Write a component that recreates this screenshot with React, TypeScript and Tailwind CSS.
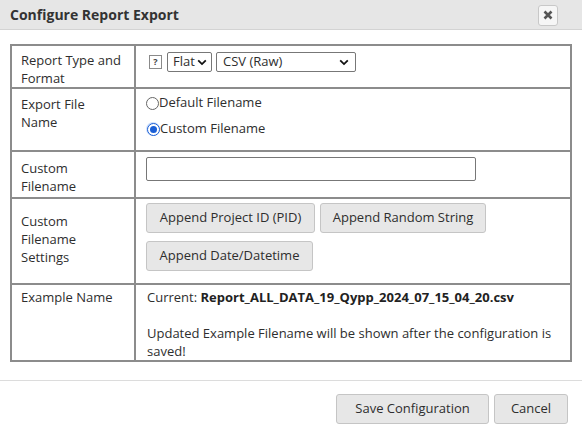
import { FC } from "react"

const Chevron: FC = () => (
    <svg width="10" height="7" viewBox="0 0 10 7" className="shrink-0">
        <path d="M1.2 1.3 5 5.1 8.8 1.3" fill="none" stroke="#111" strokeWidth="1.8" />
    </svg>
)

const Row: FC<{ label: string; h: string; lp: string; children: React.ReactNode }> = ({ label, h, lp, children }) => (
    <div className={`flex border-t-2 border-[#8c8c8c] first:border-t-0 ${h}`}>
        <div className={`w-[124px] shrink-0 border-r-2 border-[#8c8c8c] pl-[9px] pr-[12px] leading-[18px] ${lp}`}>{label}</div>
        <div className="flex-1 pl-[10px] pr-2">{children}</div>
    </div>
)

const Btn: FC<{ children: React.ReactNode; w: string }> = ({ children, w }) => (
    <button className={`h-[30px] ${w} rounded-[3px] border border-[#c5c5c5] bg-[#e7e7e7] text-[13px] text-[#2e2e2e]`}>{children}</button>
)

export default function App() {
    return (
        <div className="w-[582px] h-[436px] bg-white text-[13px] text-[#2e2e2e] font-['Open_Sans',sans-serif] overflow-hidden">
            <div className="h-[30px] bg-[#e6e6e6] border-b border-[#d3d3d3] flex items-center justify-between pl-[10px] pr-[24px]">
                <h1 className="font-bold text-[14px] text-[#333]">Configure Report Export</h1>
                <div className="w-[20px] h-[21px] mt-[1px] rounded-[3px] border border-[#c8c8c8] bg-[#f6f6f6] flex items-center justify-center">
                    <svg width="10" height="10" viewBox="0 0 10 10">
                        <path d="M1.5 1.5 8.5 8.5M8.5 1.5 1.5 8.5" stroke="#555" strokeWidth="2.6" />
                    </svg>
                </div>
            </div>

            <div className="mx-[10px] mt-[14px] w-[562px] border-2 border-[#8c8c8c]">
                <Row label="Report Type and Format" h="h-[41px]" lp="pt-[5px]">
                    <div className="flex items-center gap-[4px] pt-[6px]">
                        <span className="w-[13px] h-[14px] border border-[#8a8a8a] text-[9px] font-bold leading-[12px] text-center text-[#444] ml-[3px] mr-[1px]">?</span>
                        <div className="w-[45px] h-[20px] border border-[#777] rounded-[2px] flex items-center justify-between pl-[5px] pr-[4px]">
                            <span>Flat</span>
                            <Chevron />
                        </div>
                        <div className="w-[140px] h-[20px] border border-[#777] rounded-[2px] flex items-center justify-between pl-[6px] pr-[6px]">
                            <span>CSV (Raw)</span>
                            <Chevron />
                        </div>
                    </div>
                </Row>
                <Row label="Export File Name" h="h-[63px]" lp="pt-[6px]">
                    <div className="pt-[5px] flex flex-col gap-[8px]">
                        <div className="flex items-center h-[18px]">
                            <span className="w-[13px] h-[13px] rounded-full border border-[#666] bg-white" />
                            <span>Default Filename</span>
                        </div>
                        <div className="flex items-center h-[18px]">
                            <span className="w-[14px] h-[14px] rounded-full bg-[#cfe0fb] flex items-center justify-center">
                                <span className="w-[13px] h-[13px] rounded-full border-[1.5px] border-[#1a5fd6] bg-white flex items-center justify-center">
                                    <span className="w-[7px] h-[7px] rounded-full bg-[#1a5fd6]" />
                                </span>
                            </span>
                            <span>Custom Filename</span>
                        </div>
                    </div>
                </Row>
                <Row label="Custom Filename" h="h-[47px]" lp="pt-[7px]">
                    <div className="pt-[5px]">
                        <div className="w-[330px] h-[24px] border border-[#777] rounded-[2px]" />
                    </div>
                </Row>
                <Row label="Custom Filename Settings" h="h-[86px]" lp="pt-[13px]">
                    <div className="pt-[4px] flex flex-wrap gap-x-[5px] gap-y-[8px] w-[360px]">
                        <Btn w="w-[169px]">Append Project ID (PID)</Btn>
                        <Btn w="w-[166px]">Append Random String</Btn>
                        <Btn w="w-[167px]">Append Date/Datetime</Btn>
                    </div>
                </Row>
                <Row label="Example Name" h="h-[77px]" lp="pt-[3px]">
                    <div className="pt-[3px] leading-[18px] pl-[1px]">
                        <p>Current: <b className="text-[#222]">Report_ALL_DATA_19_Qypp_2024_07_15_04_20.csv</b></p>
                        <p className="mt-[18px]">Updated Example Filename will be shown after the configuration is saved!</p>
                    </div>
                </Row>
            </div>

            <div className="mt-[18px] border-t border-[#dcdcdc] flex justify-end gap-[5px] pt-[13px] pr-[14px]">
                <Btn w="w-[153px]">Save Configuration</Btn>
                <Btn w="w-[74px]">Cancel</Btn>
            </div>
        </div>
    )
}
